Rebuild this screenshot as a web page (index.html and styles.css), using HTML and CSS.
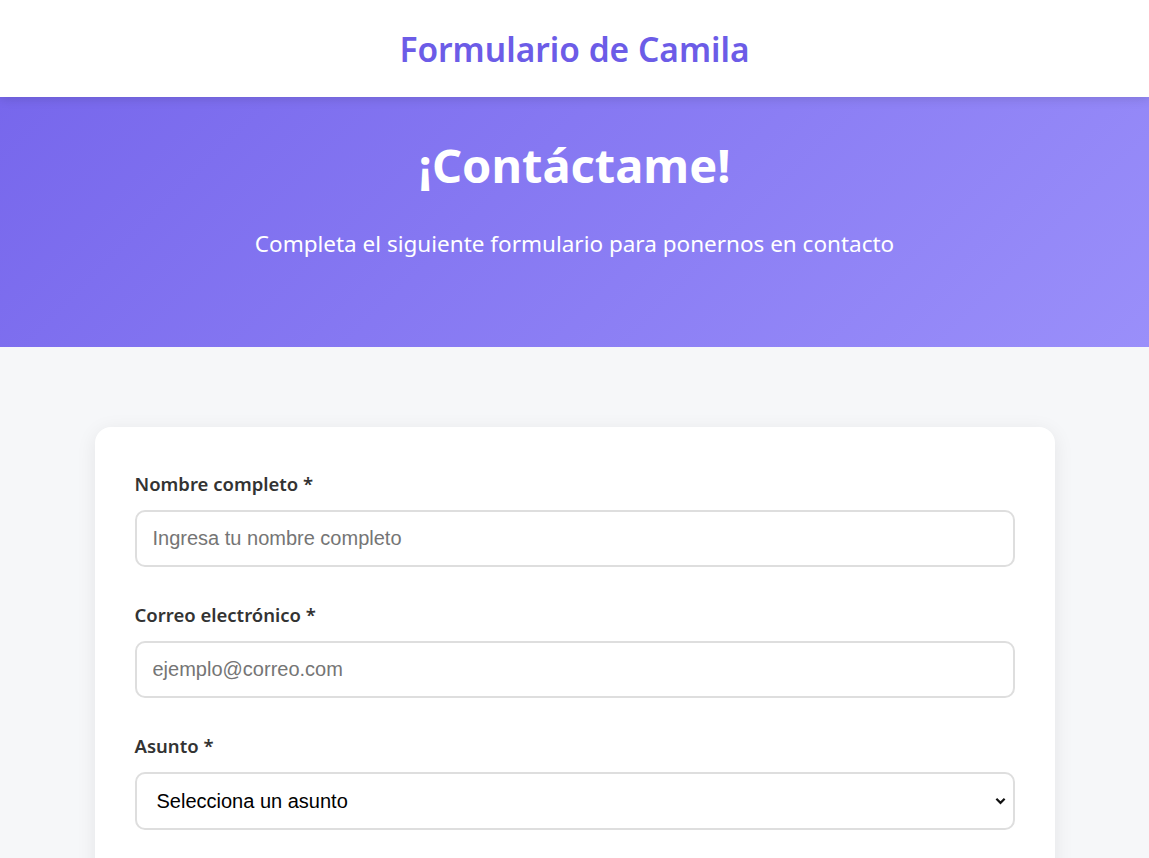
FILE: index.html
```html
<!DOCTYPE html>
<html lang="es">
<head>
<meta charset="utf-8">
<title>Formulario de Camila</title>
<link rel="stylesheet" href="styles.css">
</head>
<body>
<header class="site-header">
  <h1 class="site-title">Formulario de Camila</h1>
</header>
<section class="hero">
  <h2 class="hero-title">¡Contáctame!</h2>
  <p class="hero-sub">Completa el siguiente formulario para ponernos en contacto</p>
</section>
<main class="main">
  <form class="card">
    <div class="group">
      <label class="label" for="nombre">Nombre completo *</label>
      <input class="field" id="nombre" type="text" placeholder="Ingresa tu nombre completo">
    </div>
    <div class="group">
      <label class="label" for="correo">Correo electrónico *</label>
      <input class="field" id="correo" type="email" placeholder="ejemplo@correo.com">
    </div>
    <div class="group">
      <label class="label" for="asunto">Asunto *</label>
      <select class="field select" id="asunto">
        <option>Selecciona un asunto</option>
      </select>
    </div>
  </form>
</main>
</body>
</html>
```
FILE: styles.css
```css
* { box-sizing: border-box; }
html, body { margin: 0; padding: 0; }
body {
  font-family: "Noto Sans", "Open Sans", sans-serif;
  background: #f6f7f9;
  color: #333;
}
.site-header {
  background: #fff;
  height: 97px;
  display: flex;
  align-items: center;
  justify-content: center;
  position: relative;
  z-index: 2;
  box-shadow: 0 2px 10px rgba(0,0,0,0.12);
}
.site-title {
  margin: 0;
  font-size: 33.5px;
  font-weight: 600;
  color: #6c5ce7;
}
.hero {
  height: 250px;
  background: linear-gradient(135deg, #7767ec 0%, #9a8ffa 100%);
  color: #fff;
  text-align: center;
  padding-top: 38px;
}
.hero-title {
  margin: 0;
  font-size: 47px;
  font-weight: 700;
  line-height: 60px;
}
.hero-sub {
  margin: 34px 0 0;
  font-size: 22.5px;
  line-height: 30px;
  font-weight: 400;
}
.main {
  padding: 80px 0 40px;
}
.card {
  width: 960px;
  margin: 0 auto;
  background: #fff;
  border-radius: 16px;
  box-shadow: 0 4px 20px rgba(0,0,0,0.08);
  padding: 43px 40px 80px;
  display: flex;
  flex-direction: column;
  gap: 34px;
}
.group {
  display: flex;
  flex-direction: column;
  gap: 12px;
}
.label {
  font-size: 18.5px;
  font-weight: 600;
  color: #333;
  line-height: 28px;
}
.field {
  height: 57px;
  border: 2px solid #dedede;
  border-radius: 10px;
  padding: 0 16px;
  font-family: "Liberation Sans", Arial, sans-serif;
  font-size: 20px;
  color: #333;
  background: #fff;
  outline: none;
}
.field::placeholder { color: #757575; }
.select {
  height: 58px;
  padding: 0 20px;
  color: #000;
  appearance: none;
  background-image: url("data:image/svg+xml,%3Csvg xmlns='http://www.w3.org/2000/svg' width='12' height='8' viewBox='0 0 12 8'%3E%3Cpath d='M1.5 1.5 6 6l4.5-4.5' fill='none' stroke='%23111' stroke-width='2.4'/%3E%3C/svg%3E");
  background-repeat: no-repeat;
  background-position: right 7px center;
  background-size: 11px 8px;
}
```
